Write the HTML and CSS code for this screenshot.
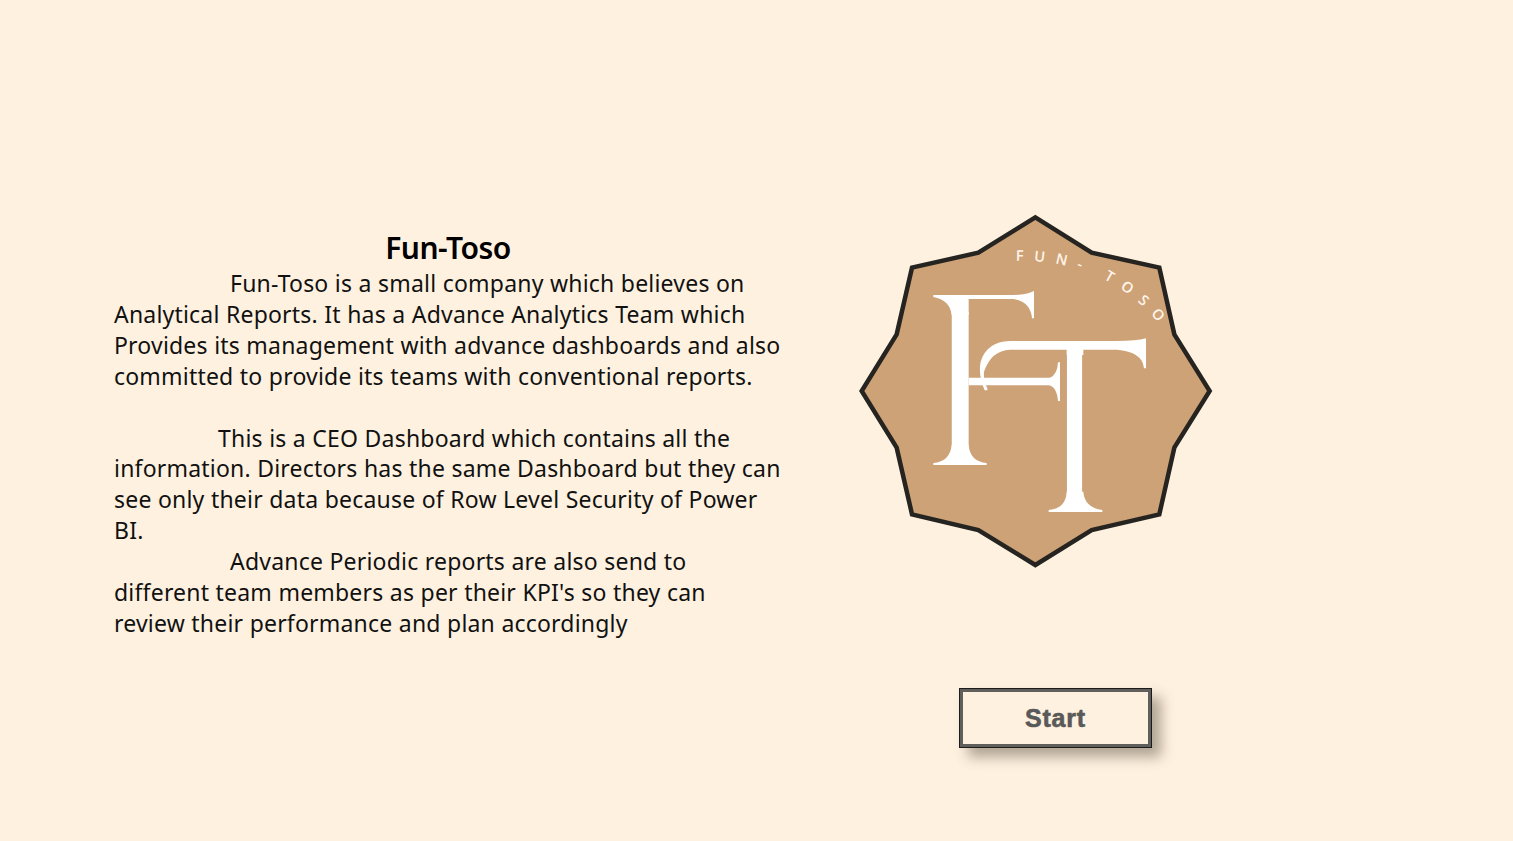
FILE: index.html
```html
<!DOCTYPE html>
<html lang="en">
<head>
<meta charset="utf-8">
<title>Fun-Toso</title>
<link rel="stylesheet" href="styles.css">
</head>
<body>
<main class="page">
  <section class="intro">
    <h1 class="intro-title">Fun-Toso</h1>
    <p class="intro-copy"><span class="indent-a"></span>Fun-Toso is a small company which believes on<br>Analytical Reports. It has a Advance Analytics Team which<br>Provides its management with advance dashboards and also<br>committed to provide its teams with conventional reports.<br><br><span class="indent-b"></span>This is a CEO Dashboard which contains all the<br>information. Directors has the same Dashboard but they can<br>see only their data because of Row Level Security of Power<br>BI.<br><span class="indent-a"></span>Advance Periodic reports are also send to<br>different team members as per their KPI's so they can<br>review their performance and plan accordingly</p>
  </section>
  <aside class="side">
    <svg class="logo" viewBox="0 0 1110 1110" role="img" aria-label="Fun-Toso logo">
      <defs>
        <clipPath id="clip-f"><path d="M305,320H356V790H305Z"/></clipPath>
        <clipPath id="clip-t"><path d="M650,440H700V930H650Z"/></clipPath>
      </defs>
      <polygon class="logo-badge" points="556,37 725,143 928,188 973,388 1079,558 973,728 928,928 725,975 556,1080 385,975 186,928 140,728 35,558 140,388 186,188 385,143"/>
      <path id="logo-arc" class="logo-guide" d="M497,168 Q790,160 962,400"/>
      <text class="logo-arc-text"><textPath href="#logo-arc">FUN- TOSO</textPath></text>
      <g clip-path="url(#clip-f)"><text class="logo-letter" transform="translate(240,780) scale(.72,1)">F</text></g>
      <g clip-path="url(#clip-t)"><text class="logo-letter" transform="translate(525,921) scale(.62,1)">T</text></g>
      <path class="logo-flourish" d="M250,270H490Q530,270 552,258V340H546Q542,290 490,282H356V330H305Q300,285 250,276Z"/>
      <path class="logo-flourish" d="M356,518H600Q622,510 624,472H630V588H624Q620,545 596,541H356Z"/>
      <path class="logo-flourish" d="M250,780V774Q300,770 305,720H356Q360,770 410,774V780Z"/>
      <path class="logo-flourish" d="M596,921V915Q648,910 650,860H700Q704,908 757,915V921Z"/>
      <path class="logo-flourish" d="M480,408H800Q860,408 888,400V490H882Q878,440 800,434H700V450H650V434H480Q424,436 402,500Q400,530 412,550V556H404Q384,510 392,470Q410,410 480,408Z"/>
    </svg>
    <button class="start-button" type="button">Start</button>
  </aside>
</main>
</body>
</html>
```
FILE: styles.css
```css
* { box-sizing: border-box; }
html, body { margin: 0; height: 100%; }
body { background: #fff1e0; overflow: hidden; }
.page { display: flex; align-items: flex-start; height: 841px; }
.intro { flex: none; width: 850px; padding: 231px 0 0 114px; color: #111; font-family: "Noto Sans", sans-serif; }
.intro-title { width: 668px; margin: 0; font-size: 30px; line-height: 34px; font-weight: 600; text-align: center; letter-spacing: -.5px; color: #000; }
.intro-copy { margin: 3px 0 0; font-size: 23px; line-height: 30.9px; white-space: nowrap; font-weight: 400; letter-spacing: .2px; word-spacing: .2px; }
.indent-a { display: inline-block; width: 116px; }
.indent-b { display: inline-block; width: 104px; }
.side { flex: none; display: flex; flex-direction: column; align-items: flex-start; padding-top: 205px; }
.logo { display: block; width: 370px; height: 370px; }
.logo-badge { fill: #cda277; stroke: #262420; stroke-width: 13.5; stroke-linejoin: miter; }
.logo-guide { fill: none; }
.logo-arc-text { font-family: "Open Sans", sans-serif; font-size: 44px; font-weight: 600; fill: #fff4e8; letter-spacing: 31px; }
.logo-letter { font-family: "Liberation Serif", serif; font-size: 785px; fill: #fff; }
.logo-flourish { fill: #fff; }
.start-button { margin: 113px 0 0 109px; width: 193px; height: 60px; background: #fff1e0; border: 1px solid #1c1c1c; outline: none; box-shadow: inset 0 0 0 3px #615f5c, 9px 9px 12px rgba(80, 70, 55, .45); color: #595959; font: 700 25px "Liberation Sans", sans-serif; letter-spacing: .8px; -webkit-text-stroke: .6px #595959; padding: 0; }
```
